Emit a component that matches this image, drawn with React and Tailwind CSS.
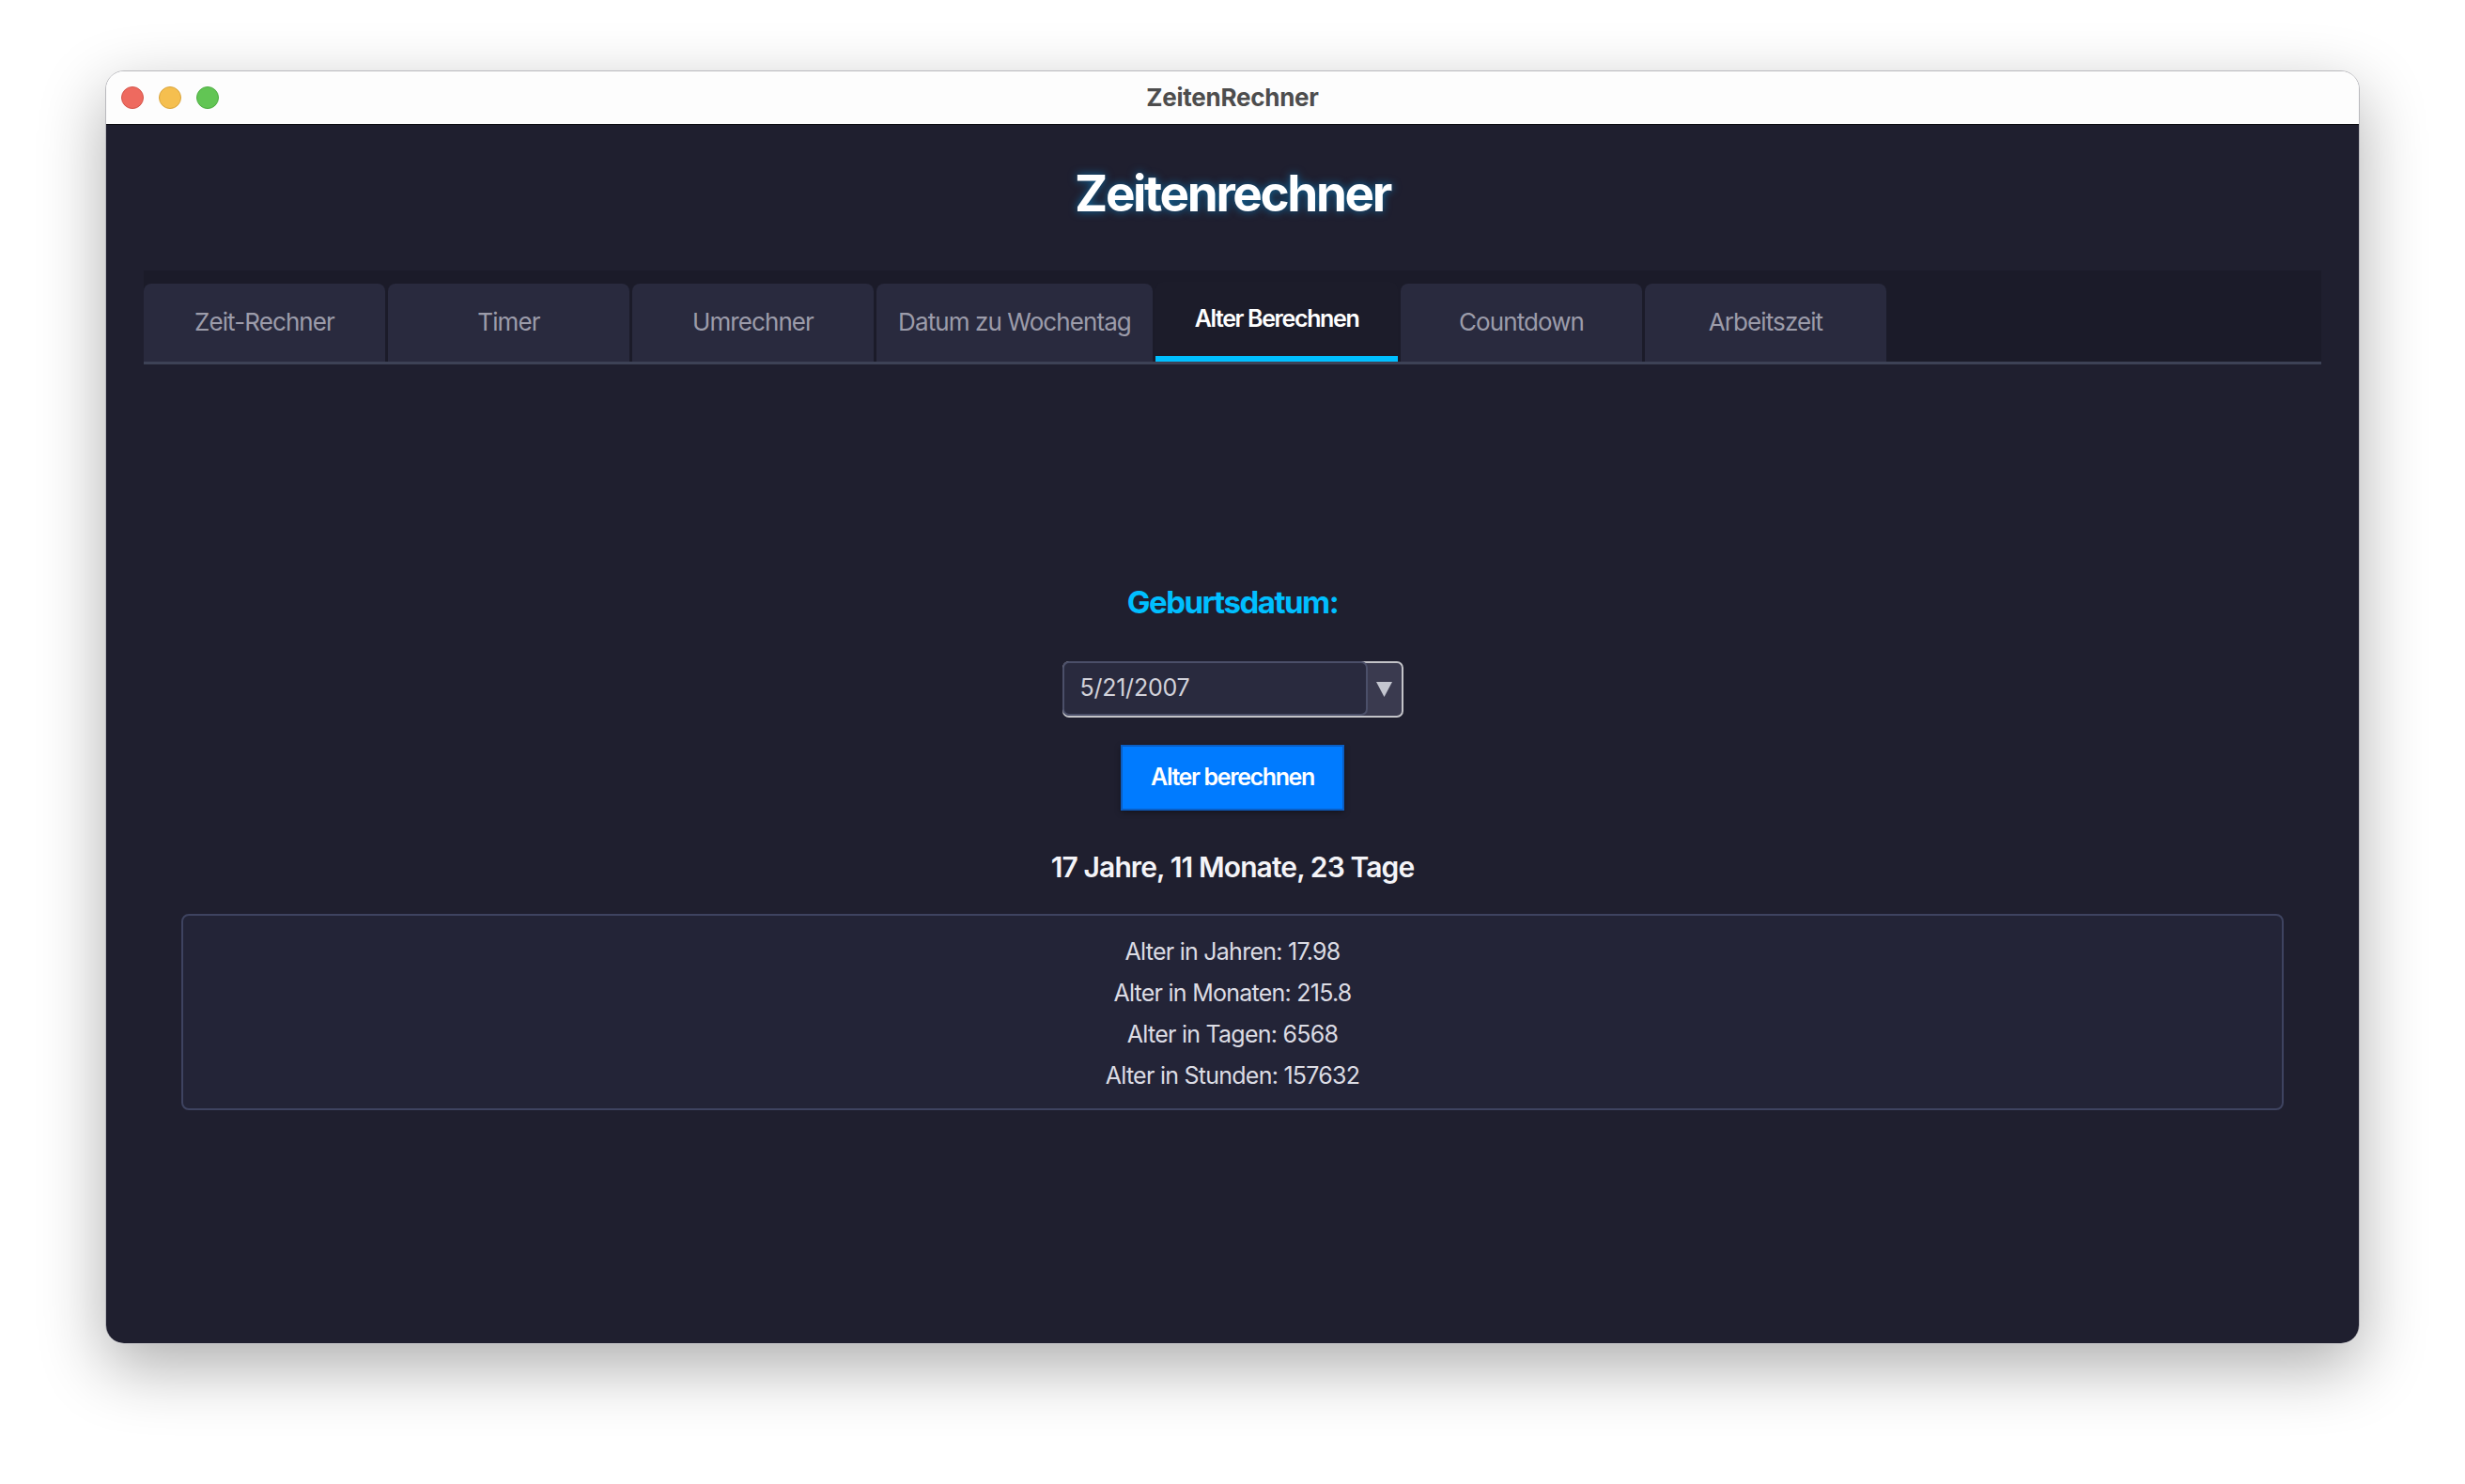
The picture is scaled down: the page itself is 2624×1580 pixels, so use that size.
import React from "react";

const tabs = [
  { label: "Zeit-Rechner", width: "w-[257px]" },
  { label: "Timer", width: "w-[257px]" },
  { label: "Umrechner", width: "w-[257px]" },
  { label: "Datum zu Wochentag", width: "w-[294px]" },
  { label: "Alter Berechnen", width: "w-[258px]", active: true },
  { label: "Countdown", width: "w-[257px]" },
  { label: "Arbeitszeit", width: "w-[257px]" },
];

const stats = [
  "Alter in Jahren: 17.98",
  "Alter in Monaten: 215.8",
  "Alter in Tagen: 6568",
  "Alter in Stunden: 157632",
];

function TitleBar() {
  return (
    <div className="h-[57px] shrink-0 bg-[#fdfdfd] border-b border-[#0b0b0f] grid grid-cols-[1fr_auto_1fr] items-center">
      <div className="flex items-center gap-4 pl-4">
        <span className="w-6 h-6 rounded-full bg-[#ee6a5f] border border-[#d4564c]" />
        <span className="w-6 h-6 rounded-full bg-[#f5bf4f] border border-[#d9a43c]" />
        <span className="w-6 h-6 rounded-full bg-[#62c554] border border-[#4eac42]" />
      </div>
      <div className="text-[26px] font-bold text-[#4d4d4d] tracking-[-0.01em] pb-[2px]">
        ZeitenRechner
      </div>
      <div />
    </div>
  );
}

function Tabs() {
  return (
    <div className="mt-[55px] bg-[#1b1b29] pt-3 flex items-end gap-[3px] border-b-[3px] border-[#3d4256]">
      {tabs.map((t) =>
        t.active ? (
          <div
            key={t.label}
            className={`${t.width} h-[85px] rounded-t-[8px] bg-[#1c1c2a] border-b-[6px] border-[#00bfff] flex items-center justify-center text-[25px] font-semibold text-white tracking-[-0.055em]`}
          >
            {t.label}
          </div>
        ) : (
          <div
            key={t.label}
            className={`${t.width} h-[83px] rounded-t-[8px] bg-[#292a3e] flex items-center justify-center pb-[2px] text-[26px] text-[#9c9caa] tracking-[-0.035em]`}
          >
            {t.label}
          </div>
        )
      )}
    </div>
  );
}

function DatePicker() {
  return (
    <div className="mt-[46px] w-[363px] h-[60px] flex rounded-[7px] border-2 border-[#c3c3c8] bg-[#3a3a4f]">
      <div className="flex-1 -mt-[2px] -ml-[2px] rounded-[7px] border-2 border-[#4b4f69] bg-[#292a3e] flex items-center pl-[17px] text-[25px] text-[#d2d2da] tracking-[-0.01em]">
        5/21/2007
      </div>
      <div className="w-[36px] flex items-center justify-center">
        <svg width="17" height="16" viewBox="0 0 17 16">
          <polygon points="0,0 17,0 8.5,16" fill="#c3c5cf" />
        </svg>
      </div>
    </div>
  );
}

export default function App() {
  return (
    <div className="w-[2624px] h-[1580px] bg-white pl-[112px] pt-[75px] font-[Inter,'Noto_Sans',sans-serif]">
      <div className="w-[2400px] h-[1356px] rounded-[20px] overflow-hidden flex flex-col border border-[#b9b9bd] shadow-[0_24px_70px_rgba(0,0,0,0.32)]">
        <TitleBar />

        <div className="flex-1 bg-[#1f1f2f] px-10 flex flex-col">
          {/* heading */}
          <h1 className="pt-[47px] text-center text-[53px] leading-none font-bold text-white tracking-[-0.045em] [text-shadow:0_0_10px_rgba(0,170,255,0.55)]">
            Zeitenrechner
          </h1>

          <Tabs />

          {/* age form */}
          <div className="flex flex-col items-center">
            <h2 className="mt-[237px] text-[33px] leading-none font-bold text-[#00bfff] tracking-[-0.045em]">
              Geburtsdatum:
            </h2>

            <DatePicker />

            <button className="mt-[29px] w-[238px] h-[70px] bg-[#007bff] border-2 border-[#0a5ec4] text-white text-[25px] font-semibold tracking-[-0.055em] shadow-[0_2px_6px_rgba(0,0,0,0.35)]">
              Alter berechnen
            </button>

            <p className="mt-[45px] text-[30px] leading-none font-semibold text-[#f4f4f8] tracking-[-0.03em]">
              17 Jahre, 11 Monate, 23 Tage
            </p>
          </div>

          <div className="mt-[35px] mx-10 rounded-[8px] border-2 border-[#3e4360] bg-[#232437] pt-[16px] pb-[13px] flex flex-col items-center">
            {stats.map((s) => (
              <div key={s} className="h-[44px] leading-[44px] text-[25px] text-[#dcdce4] tracking-[-0.03em]">
                {s}
              </div>
            ))}
          </div>
        </div>
      </div>
    </div>
  );
}
